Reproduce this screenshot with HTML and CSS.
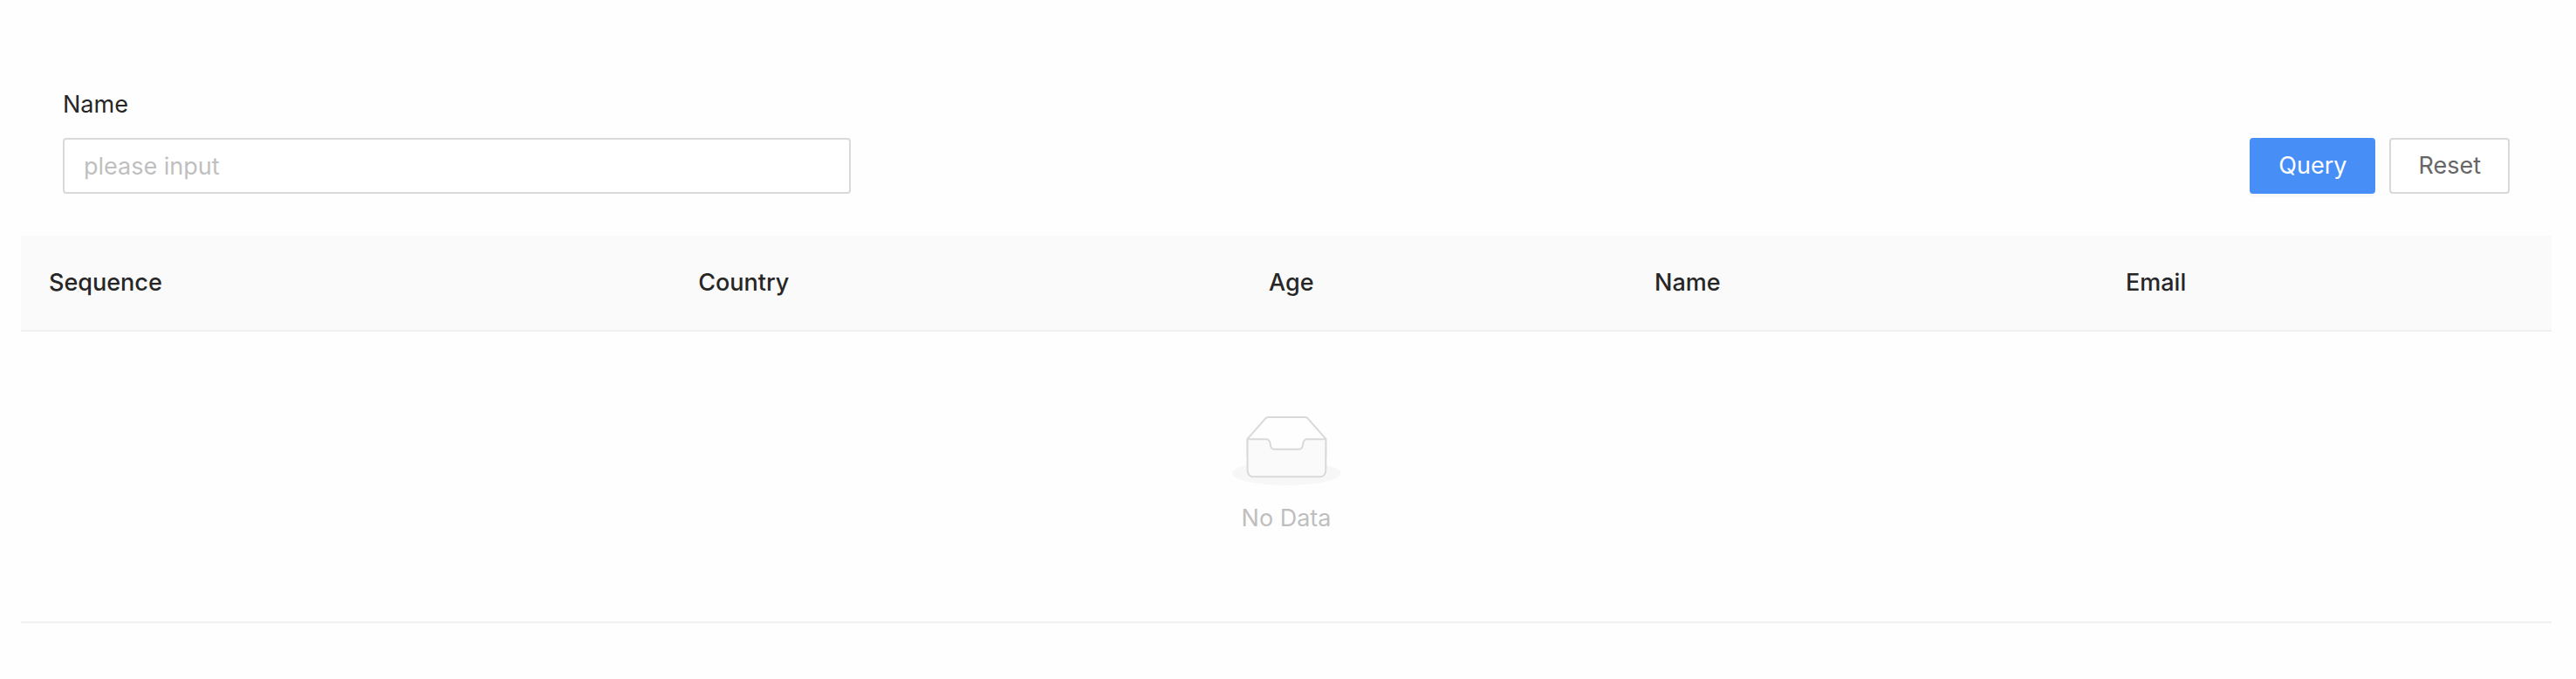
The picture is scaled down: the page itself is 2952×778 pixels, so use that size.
FILE: index.html
```html
<!DOCTYPE html>
<html lang="en">
<head>
<meta charset="utf-8">
<meta name="viewport" content="width=device-width, initial-scale=1">
<title>Query table</title>
<link rel="stylesheet" href="styles.css">
</head>
<body>
<main class="page">
  <form class="query-form">
    <div class="field">
      <label class="field-label" for="name">Name</label>
      <input class="field-input" id="name" name="name" type="text" placeholder="please input">
    </div>
    <div class="actions">
      <button class="button button-primary" type="submit">Query</button>
      <button class="button" type="reset">Reset</button>
    </div>
  </form>
  <table class="table">
    <colgroup>
      <col class="col-sequence">
      <col class="col-country">
      <col class="col-age">
      <col class="col-name">
      <col class="col-email">
    </colgroup>
    <thead>
      <tr>
        <th scope="col">Sequence</th>
        <th scope="col">Country</th>
        <th scope="col">Age</th>
        <th scope="col">Name</th>
        <th scope="col">Email</th>
      </tr>
    </thead>
    <tbody>
      <tr>
        <td colspan="5">
          <div class="empty">
            <svg class="empty-image" viewBox="0 0 64 41" aria-hidden="true">
              <g transform="translate(0 1)" fill="none" fill-rule="evenodd">
                <ellipse fill="#f7f7f7" cx="32" cy="33" rx="32" ry="7"/>
                <g fill-rule="nonzero" stroke="#d9d9d9">
                  <path d="M55 12.76L44.854 1.258C44.367.474 43.656 0 42.907 0H21.093c-.749 0-1.46.474-1.947 1.257L9 12.761V22h46v-9.24z"/>
                  <path fill="#fafafa" d="M41.613 15.931c0-1.605.994-2.93 2.227-2.931H55v18.137C55 33.26 53.68 35 52.05 35h-40.1C10.32 35 9 33.259 9 31.137V13h11.16c1.233 0 2.227 1.323 2.227 2.928v.022c0 1.605 1.005 2.901 2.237 2.901h14.752c1.232 0 2.237-1.308 2.237-2.913v-.007z"/>
                </g>
              </g>
            </svg>
            <p class="empty-text">No Data</p>
          </div>
        </td>
      </tr>
    </tbody>
  </table>
</main>
</body>
</html>
```
FILE: styles.css
```css
* {
  box-sizing: border-box;
}

body {
  margin: 0;
  background: #fefefe;
  color: #262626;
  font-family: Inter, "Liberation Sans", sans-serif;
  font-size: 27px;
  line-height: 44px;
}

.page {
  padding: 48px 28px 48px 24px;
}

.query-form {
  display: grid;
  grid-template-columns: repeat(3, 1fr);
  column-gap: 48px;
  align-items: end;
  padding: 50px 48px 48px;
}

.field {
  display: flex;
  flex-direction: column;
  gap: 16px;
}

.field-input {
  width: 100%;
  height: 64px;
  padding: 8px 22px;
  border: 2px solid #d9d9d9;
  border-radius: 4px;
  background: #fff;
  color: inherit;
  font: inherit;
}

.field-input::placeholder {
  color: #bfbfbf;
  opacity: 1;
}

.actions {
  grid-column: 3;
  display: flex;
  justify-content: flex-end;
  gap: 16px;
}

.button {
  height: 64px;
  padding: 0 31px;
  border: 2px solid #d9d9d9;
  border-radius: 4px;
  background: #fff;
  color: #666;
  font: inherit;
}

.button-primary {
  border-color: #478ff7;
  background: #478ff7;
  color: #fff;
  box-shadow: 0 4px 0 rgba(0, 0, 0, 0.02);
}

.table {
  width: 100%;
  table-layout: fixed;
  border-collapse: separate;
  border-spacing: 0;
}

.col-sequence { width: 25.66%; }
.col-country { width: 22.55%; }
.col-age { width: 15.24%; }
.col-name { width: 18.62%; }
.col-email { width: 17.93%; }

.table th,
.table td {
  padding: 32px;
  border-bottom: 2px solid #f0f0f0;
}

.table th {
  background: #fafafa;
  font-weight: 500;
  text-align: left;
}

.empty {
  display: flex;
  flex-direction: column;
  align-items: center;
  gap: 16px;
  margin: 64px 0;
}

.empty-image {
  height: 80px;
}

.empty-text {
  margin: 0;
  color: #bfbfbf;
}
```
